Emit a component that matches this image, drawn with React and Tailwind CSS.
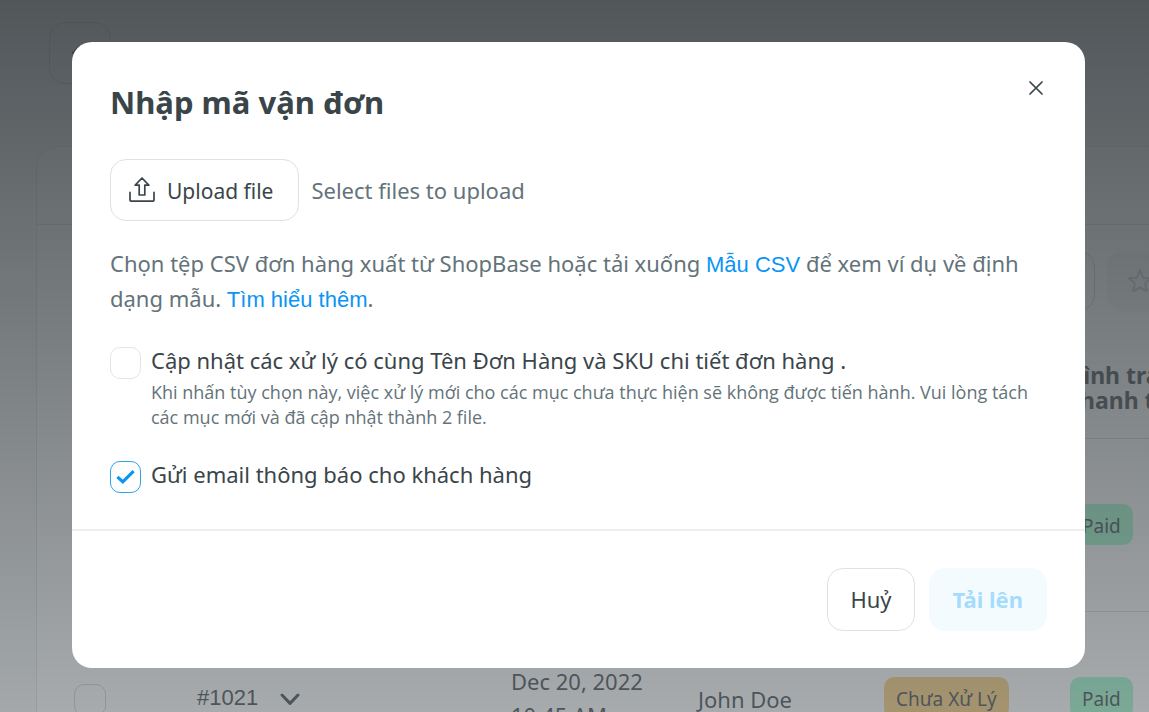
import { useState } from "react";
import { ArrowLeft, Search } from "lucide-react";

const ORDERS = [
  {
    id: "#1022",
    date: "Dec 20, 2022",
    time: "11:02 AM",
    customer: "John Doe",
    fulfillment: "Chưa Xử Lý",
    payment: "Paid",
  },
  {
    id: "#1021",
    date: "Dec 20, 2022",
    time: "10:45 AM",
    customer: "John Doe",
    fulfillment: "Chưa Xử Lý",
    payment: "Paid",
  },
];

function UploadIcon() {
  return (
    <svg width="26" height="26" viewBox="0 0 26 26" fill="none" stroke="currentColor" aria-hidden="true">
      <path
        d="M13 1 L19.8 8.2 H15.8 V18 H10.2 V8.2 H6.2 Z"
        strokeWidth="1.7"
        strokeLinejoin="round"
      />
      <path
        d="M1 15.4 V22.4 Q1 24.2 2.8 24.2 H23.2 Q25 24.2 25 22.4 V15.4"
        strokeWidth="1.7"
        strokeLinecap="round"
      />
    </svg>
  );
}

function StarIcon() {
  return (
    <svg width="26" height="26" viewBox="0 0 26 26" fill="none" stroke="currentColor" aria-hidden="true">
      <path
        d="M13 2 L16 9.8 L24 10.2 L18 15.4 L20 23.4 L13 19.4 L6 23.4 L8 15.4 L2 10.2 L10 9.8 Z"
        strokeWidth="1.8"
        strokeLinejoin="round"
      />
    </svg>
  );
}

function Checkbox({ id, checked, onChange }) {
  return (
    <span className="relative block h-8 w-[31px] shrink-0">
      <input
        id={id}
        type="checkbox"
        checked={checked}
        onChange={(e) => onChange(e.target.checked)}
        className="block h-8 w-[31px] appearance-none rounded-[10px] border border-[#e3e6e8] bg-white checked:border-[#2ea3f2]"
      />
      {checked && (
        <svg
          className="pointer-events-none absolute inset-0"
          width="31"
          height="32"
          viewBox="0 0 31 32"
          fill="none"
          aria-hidden="true"
        >
          <path d="M7.4 15.8 L12.8 20.8 L23.6 10.2" stroke="#0a95f5" strokeWidth="3.2" />
        </svg>
      )}
    </span>
  );
}

function OrdersPage() {
  return (
    <div className="h-screen overflow-hidden bg-[#f8f9fa] pl-9 pt-[22px] text-[22px] text-[#37424a]">
      <button
        type="button"
        aria-label="Back"
        className="ml-[13px] flex h-[62px] w-[62px] items-center justify-center rounded-2xl border border-[#c8cdd0]"
      >
        <ArrowLeft className="h-6 w-6" />
      </button>

      <div className="mt-[62px] rounded-tl-[22px] border-l border-t border-[#dde1e3] bg-white">
        <div className="h-[78px] border-b border-[#dde1e3]" />

        {/* FILTER BAR */}
        <div className="flex gap-3 pl-9 pt-[26px]">
          <label className="flex h-[60px] grow items-center gap-3 rounded-2xl border border-[#ccd1d4] px-5">
            <Search className="h-6 w-6" />
            <input type="search" aria-label="Search orders" className="grow outline-none" />
          </label>
          <button
            type="button"
            aria-label="Save view"
            className="-mr-3 flex h-[60px] w-[54px] shrink-0 items-center justify-end rounded-l-2xl bg-[#f3f5f6] pr-2 text-[#bcc2c6]"
          >
            <StarIcon />
          </button>
        </div>

        {/* ORDER TABLE */}
        <div className="pl-[37px]">
          <table className="w-full table-fixed text-left">
            <colgroup>
              <col className="w-[123px]" />
              <col className="w-[314px]" />
              <col className="w-[187px]" />
              <col className="w-[186px]" />
              <col className="w-[186px]" />
              <col />
            </colgroup>
            <thead>
              <tr className="h-[127px] border-b border-[#d3d8da]">
                <th />
                <th />
                <th />
                <th />
                <th />
                <th className="whitespace-nowrap pt-7 text-[23px] leading-[25px]">
                  Tình trạng
                  <br />
                  thanh toán
                </th>
              </tr>
            </thead>
            <tbody>
              {ORDERS.map((order) => (
                <tr key={order.id} className="h-[173px] border-b border-[#d3d8da]">
                  <td className="pt-1">
                    <input
                      type="checkbox"
                      aria-label={order.id}
                      className="block h-8 w-8 appearance-none rounded-[10px] border border-[#ccd1d4]"
                    />
                  </td>
                  <td>
                    <span className="flex items-center gap-[22px] font-['Liberation_Sans',sans-serif]">
                      {order.id}
                      <svg width="20" height="14" viewBox="0 0 20 14" fill="none" stroke="currentColor" aria-hidden="true">
                        <path d="M2 4 L10 12.4 L18 4" strokeWidth="3" strokeLinecap="round" strokeLinejoin="round" />
                      </svg>
                    </span>
                  </td>
                  <td className="whitespace-nowrap leading-[34px]">
                    {order.date}
                    <br />
                    {order.time}
                  </td>
                  <td className="whitespace-nowrap pt-1">{order.customer}</td>
                  <td>
                    <span className="inline-block whitespace-nowrap rounded-[10px] bg-[#fbcb76] px-3 pt-1 text-[19px] leading-[37px]">
                      {order.fulfillment}
                    </span>
                  </td>
                  <td>
                    <span className="inline-block rounded-[10px] bg-[#9bfbcc] px-3 pt-1 text-[19px] leading-[37px]">
                      {order.payment}
                    </span>
                  </td>
                </tr>
              ))}
            </tbody>
          </table>
        </div>
      </div>
    </div>
  );
}

export default function App() {
  const [updateExisting, setUpdateExisting] = useState(false);
  const [notifyCustomer, setNotifyCustomer] = useState(true);

  return (
    <div className="font-['Noto_Sans',sans-serif]">
      <OrdersPage />

      {/* BACKDROP */}
      <div className="fixed inset-0 flex items-start bg-linear-to-b from-[rgb(60_66_69/0.89)] to-[rgb(95_102_105/0.55)] pl-[72px] pr-16 pt-[42px]">
        <div
          role="dialog"
          aria-modal="true"
          aria-labelledby="import-title"
          className="w-full rounded-[20px] bg-white text-[#3a454a]"
        >
          <div className="px-[38px] pb-9 pt-9">
            <div className="flex items-start justify-between">
              <h2 id="import-title" className="text-[31px] font-bold leading-[48px]">
                Nhập mã vận đơn
              </h2>
              <button type="button" aria-label="Close" className="-mr-1 flex h-5 w-[30px] items-center justify-center">
                <svg width="14" height="14" viewBox="0 0 14 14" stroke="currentColor" strokeWidth="1.7" aria-hidden="true">
                  <path d="M1 1 L13 13 M13 1 L1 13" strokeLinecap="round" />
                </svg>
              </button>
            </div>

            <div className="mt-[33px] flex items-center gap-3">
              <button
                type="button"
                className="flex h-[62px] items-center gap-3 rounded-2xl border border-[#dfe1e3] pl-[18px] pr-[25px] text-[21px]"
              >
                <UploadIcon />
                <span className="pt-1">Upload file</span>
              </button>
              <span className="text-[22px] text-[#64737a]">Select files to upload</span>
            </div>

            <p className="mt-[25px] text-[22px] leading-[35px] text-[#64737a]">
              Chọn tệp CSV đơn hàng xuất từ ShopBase hoặc tải xuống{" "}
              <a href="#sample" className="font-['Liberation_Sans',sans-serif] leading-none text-[#0a95f5]">
                Mẫu CSV
              </a>{" "}
              để xem ví dụ về định dạng mẫu.{" "}
              <a href="#learn" className="font-['Liberation_Sans',sans-serif] leading-none text-[#0a95f5]">
                Tìm hiểu thêm
              </a>
              .
            </p>

            <div className="mt-[31px] flex gap-[10px]">
              <Checkbox id="update-existing" checked={updateExisting} onChange={setUpdateExisting} />
              <div>
                <label htmlFor="update-existing" className="block text-[22px] leading-[26px]">
                  Cập nhật các xử lý có cùng Tên Đơn Hàng và SKU chi tiết đơn hàng .
                </label>
                <p className="mt-[7px] font-['Open_Sans',sans-serif] text-lg leading-[25px] text-[#64737a]">
                  Khi nhấn tùy chọn này, việc xử lý mới cho các mục chưa thực hiện sẽ không được tiến hành. Vui lòng tách
                  các mục mới và đã cập nhật thành 2 file.
                </p>
              </div>
            </div>

            <div className="mt-[31px] flex gap-[10px]">
              <Checkbox id="notify-customer" checked={notifyCustomer} onChange={setNotifyCustomer} />
              <label htmlFor="notify-customer" className="block text-[22px] leading-[26px]">
                Gửi email thông báo cho khách hàng
              </label>
            </div>
          </div>

          <div className="flex justify-end gap-[14px] border-t-2 border-[#eceeef] px-[38px] py-[37px]">
            <button type="button" className="h-[63px] rounded-2xl border border-[#dfe1e3] px-[22px] text-[22px]">
              Huỷ
            </button>
            <button
              type="button"
              disabled
              className="h-[63px] rounded-2xl bg-[#f3fbff] px-6 text-[22px] font-bold text-[#a6dcfb]"
            >
              Tải lên
            </button>
          </div>
        </div>
      </div>
    </div>
  );
}
